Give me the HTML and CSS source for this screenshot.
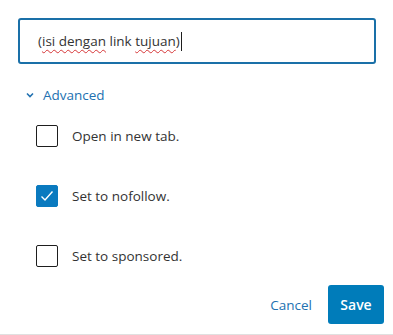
FILE: index.html
```html
<!DOCTYPE html>
<html>
<head>
    <link rel="stylesheet" href="styles.css">
</head>
<body>
    <div class="popover">
        <div class="url-field">
            <span>(<span class="typo">isi dengan</span> link <span class="typo">tujuan</span>)</span><span class="caret"></span>
        </div>

        <button class="toggle">
            <svg width="8" height="6" viewBox="0 0 8 6"><path d="M1 1.5 L4 4.5 L7 1.5" fill="none" stroke="#2271b1" stroke-width="1.6"/></svg>
            <span>Advanced</span>
        </button>

        <div class="options">
            <label class="option">
                <span class="box"></span>
                <span>Open in new tab.</span>
            </label>
            <label class="option">
                <span class="box checked">
                    <svg width="14" height="12" viewBox="0 0 14 12"><path d="M1.5 6.5 L5 10 L12.5 1.5" fill="none" stroke="#fff" stroke-width="1.4"/></svg>
                </span>
                <span>Set to nofollow.</span>
            </label>
            <label class="option">
                <span class="box"></span>
                <span>Set to sponsored.</span>
            </label>
        </div>

        <div class="actions">
            <button class="cancel">Cancel</button>
            <button class="save">Save</button>
        </div>
    </div>
</body>
</html>
```

FILE: styles.css
```css
* {
    margin: 0;
    padding: 0;
    box-sizing: border-box;
    font-family: "Open Sans", "Noto Sans", sans-serif;
}

body {
    background: #fff;
    width: 393px;
    height: 335px;
    overflow: hidden;
}

.popover {
    height: 335px;
    border-bottom: 1px solid #e0e0e0;
    padding: 18px 17px 0 18px;
    color: #1e1e1e;
}

.url-field {
    height: 46px;
    border: 2px solid #1a70a8;
    border-radius: 3px;
    padding: 0 0 0 18px;
    display: flex;
    align-items: center;
    font-size: 13.5px;
    color: #333;
}

.typo {
    text-decoration: underline wavy #d63638;
    text-decoration-thickness: 1px;
    text-underline-offset: 3px;
    text-decoration-skip-ink: none;
}

.caret {
    width: 1px;
    height: 19px;
    background: #1e1e1e;
    margin-left: 1px;
}

button {
    border: none;
    background: none;
    cursor: pointer;
    font-size: 13.5px;
}

.toggle {
    display: flex;
    align-items: center;
    gap: 9px;
    margin: 22px 0 0 8px;
    color: #2271b1;
    height: 18px;
}

.options {
    display: flex;
    flex-direction: column;
    gap: 38px;
    margin: 21px 0 0 18px;
}

.option {
    display: flex;
    align-items: center;
    gap: 14px;
    font-size: 13.5px;
    color: #333;
    height: 22px;
}

.box {
    width: 22px;
    height: 22px;
    border: 1px solid #1e1e1e;
    border-radius: 2px;
    display: flex;
    align-items: center;
    justify-content: center;
}

.box.checked {
    background: #0a7abf;
    border-color: #0a7abf;
}

.actions {
    display: flex;
    justify-content: flex-end;
    align-items: center;
    gap: 16px;
    margin-top: 18px;
}

.cancel {
    color: #2271b1;
}

.save {
    background: #007cba;
    color: #fff;
    width: 56px;
    height: 39px;
    border-radius: 3px;
    font-size: 14px;
    font-weight: 600;
    margin-right: -8px;
}
```
